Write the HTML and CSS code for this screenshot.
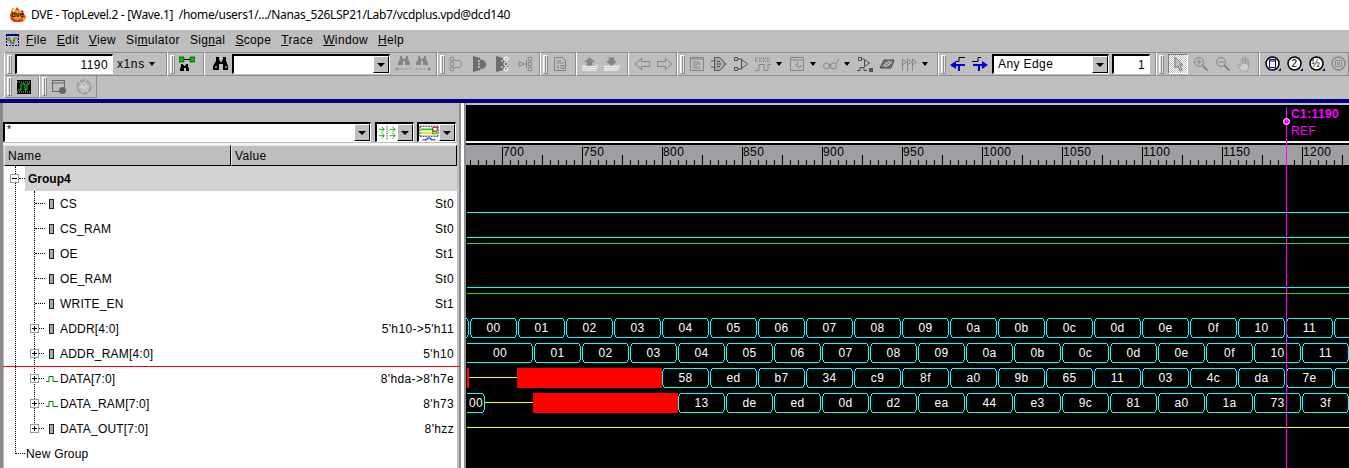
FILE: index.html
```html
<!DOCTYPE html>
<html>
<head>
    <meta charset="UTF-8">
    <title>DVE - TopLevel.2 - [Wave.1]</title>
    <link rel="stylesheet" href="styles.css">
</head>
<body>
    <svg class="defs" width="0" height="0">
        <symbol id="i-bin" viewBox="0 0 16 16"><path d="M3 1h3v3h1v2h2V4h1V1h3v4l2 5v4H10V8H6v6H0v-4l3-5z" fill="currentColor"/><path d="M2 11h2M12 11h2" stroke="#fff"/></symbol>
        <symbol id="i-bin-prev" viewBox="0 0 18 16"><path d="M5 0h2v2h1v1h2V2h1V0h2v3l2 4v2h-5V5H8v4H3V7l2-4z" fill="currentColor"/><path d="M2 13h15" stroke="currentColor" stroke-dasharray="1 1"/><path d="M0 13l3-2v4z" fill="currentColor"/></symbol>
        <symbol id="i-bin-next" viewBox="0 0 18 16"><path d="M5 0h2v2h1v1h2V2h1V0h2v3l2 4v2h-5V5H8v4H3V7l2-4z" fill="currentColor"/><path d="M1 13h15" stroke="currentColor" stroke-dasharray="1 1"/><path d="M18 13l-3-2v4z" fill="currentColor"/></symbol>
        <symbol id="i-gate-a" viewBox="0 0 16 16"><circle cx="3" cy="3" r="2" fill="none" stroke="currentColor"/><circle cx="3" cy="8" r="2" fill="none" stroke="currentColor"/><circle cx="3" cy="13" r="2" fill="none" stroke="currentColor"/><path d="M5.500 4.500H9a3.500 3.500 0 0 1 0 7H5.500" fill="none" stroke="currentColor"/></symbol>
        <symbol id="i-gate-b" viewBox="0 0 16 16"><path d="M1 0l7 2v2h1a4.500 4.500 0 0 1 0 9H8v1l-7 2z" fill="#6e6e6e"/><path d="M8 4h1a4.500 4.500 0 0 1 3 8" fill="none" stroke="#6e6e6e"/><path d="M6 5h2M6 8h2M6 11h2" stroke="#fff"/></symbol>
        <symbol id="i-gate-c" viewBox="0 0 16 16"><path d="M1 0l7 2v2h1a4.500 4.500 0 0 1 0 9H8v1l-7 2z" fill="#6e6e6e"/><circle cx="11" cy="3" r="2" fill="none" stroke="#fff"/><circle cx="11" cy="8" r="2" fill="#6e6e6e" stroke="#fff"/><circle cx="11" cy="13" r="2" fill="none" stroke="#fff"/><path d="M6 5h2M6 11h2" stroke="#fff"/></symbol>
        <symbol id="i-gate-d" viewBox="0 0 16 16"><path d="M1 5.500L6 8l-5 2.500zM6 8h2" fill="none" stroke="currentColor"/><circle cx="12" cy="3" r="2" fill="none" stroke="currentColor"/><circle cx="12" cy="8" r="2" fill="none" stroke="currentColor"/><circle cx="12" cy="13" r="2" fill="none" stroke="currentColor"/><path d="M8.500 4v8" stroke="currentColor"/></symbol>
        <symbol id="i-doc" viewBox="0 0 16 16"><path d="M2.500 1.500h8l3 3v10h-11zM5 5h4M5 7h7M5 10h2M5 12h2M9 9.500h3v3H9z" fill="none" stroke="currentColor"/></symbol>
        <symbol id="i-up" viewBox="0 0 17 16"><path d="M8 1l6 5h-3v4H5V6H2z" fill="currentColor"/><path d="M0 10.500h14M0 12.500h15M0 14.500h15M14 11l3-2M15 13l2-2" stroke="#fff"/></symbol>
        <symbol id="i-down" viewBox="0 0 17 16"><path d="M8 10l6-5h-3V1H5v4H2z" fill="currentColor"/><path d="M0 10.500h14M0 12.500h15M0 14.500h15M14 11l3-2M15 13l2-2" stroke="#fff"/></symbol>
        <symbol id="i-left" viewBox="0 0 16 14"><path d="M7.500 1.500L1 7l6.500 5.500V9.500h8v-5h-8z" fill="none" stroke="currentColor"/></symbol>
        <symbol id="i-right" viewBox="0 0 16 14"><path d="M8.500 1.500L15 7l-6.500 5.500V9.500h-8v-5h8z" fill="none" stroke="currentColor"/></symbol>
        <symbol id="i-list" viewBox="0 0 16 16"><path d="M1.500 1.500h13v13h-13z" fill="none" stroke="currentColor"/><path d="M1 3h14M4 6h6M4 8h8M4 10h4M4 12h7" stroke="currentColor"/></symbol>
        <symbol id="i-mux" viewBox="0 0 16 16"><path d="M3.500 1.500h5l3 2.500a5 5 0 0 1 0 8l-3 2.500h-5z" fill="#a8a8a8" stroke="#555"/><path d="M0 5h4M0 11h4M14 8h2M6 5.500h3M6 8h4M6 10.500h3" stroke="#555"/></symbol>
        <symbol id="i-gates" viewBox="0 0 16 16"><path d="M1.500 1.500h3v3h-3zM1.500 11.500h3v3h-3zM8.500 3.500l6 4.500-6 4.500zM4 3h4.500v2M4 13h4.500v-2" fill="none" stroke="currentColor"/></symbol>
        <symbol id="i-waves" viewBox="0 0 16 16"><path d="M0 2h16M0 5.500h16" stroke="currentColor" stroke-dasharray="1 1"/><path d="M1 2v3M5 2v3M9 2v3M13 2v3" stroke="currentColor"/><path d="M0 14.500h4v-6h5v6h4v-6h3" fill="none" stroke="currentColor"/></symbol>
        <symbol id="i-sched" viewBox="0 0 16 16"><path d="M1.500 1.500h13v13h-13z" fill="none" stroke="currentColor"/><path d="M1 4h14M8.500 6v3H6M8 11h4M12 9v2" stroke="currentColor" fill="none"/></symbol>
        <symbol id="i-glass" viewBox="0 0 16 16"><circle cx="3.500" cy="10" r="3" fill="none" stroke="currentColor"/><circle cx="10.500" cy="10" r="3" fill="none" stroke="currentColor"/><path d="M6 9h2M13 8l3-5" fill="none" stroke="currentColor"/></symbol>
        <symbol id="i-gate-wave" viewBox="0 0 16 16"><path d="M1.500 1.500h3v3h-3zM7.500 3.500l5 3.500-5 3.500zM4 3h3M0 14.500h3v-3h4v3h3" fill="none" stroke="currentColor"/><path d="M12 12h4v4h-4z" fill="#555"/></symbol>
        <symbol id="i-chip" viewBox="0 0 16 16"><path d="M1 12l4-8h10l-3 8z" fill="#777" stroke="#444"/><path d="M4 10l7-5M6 11l7-5" stroke="#ddd"/></symbol>
        <symbol id="i-flags" viewBox="0 0 16 16"><path d="M1.500 15V3l4 3-4 3M6.500 15V3l4 3-4 3M11.500 15V3l4 3-4 3" fill="none" stroke="currentColor"/></symbol>
        <symbol id="i-edge-prev" viewBox="0 0 16 16"><path d="M6 5.500h3v-4h6" fill="none" stroke="#000"/><path d="M0 9l6-4v3h9v2H6v3z" fill="#00d"/><path d="M8.500 8v7M9.500 8v7" stroke="#00d"/></symbol>
        <symbol id="i-edge-next" viewBox="0 0 16 16"><path d="M0 5.500h6v-4h3" fill="none" stroke="#000"/><path d="M16 9l-6-4v3H1v2h9v3z" fill="#00d"/><path d="M6.500 8v7M7.500 8v7" stroke="#00d"/></symbol>
        <symbol id="i-pointer" viewBox="0 0 16 16"><path d="M5 1v11l3-2 2 5 2-1-2-5h3z" fill="#bebebe" stroke="#777"/></symbol>
        <symbol id="i-zoom-in" viewBox="0 0 16 16"><circle cx="6" cy="6" r="4.500" fill="none" stroke="currentColor"/><path d="M3.500 6h5M6 3.500v5" stroke="currentColor"/><path d="M9.500 9.500l5 5" stroke="currentColor" stroke-width="2"/></symbol>
        <symbol id="i-zoom-out" viewBox="0 0 16 16"><circle cx="6" cy="6" r="4.500" fill="none" stroke="currentColor"/><path d="M3.500 6h5" stroke="currentColor"/><path d="M9.500 9.500l5 5" stroke="currentColor" stroke-width="2"/></symbol>
        <symbol id="i-hand" viewBox="0 0 16 16"><path d="M4 15L1 9l1-1 2 2V3h1.500v5V1.500H7V8 1h1.500v7-6H10v7-5h1.500v7l-1 4z" fill="#cfcfcf" stroke="#9a9a9a" stroke-width=".8"/></symbol>
        <symbol id="i-mark" viewBox="0 0 16 16"><circle cx="7.500" cy="7.500" r="6.500" fill="#fff" stroke="#000" stroke-width="1.500"/><path d="M13 15h3v-3z" fill="#00008b"/></symbol>
    </svg>

    <header class="titlebar">
        <svg class="app-logo" viewBox="0 0 18 16" width="18" height="16">
            <path d="M1 9l2-5 2 2 3-5 3 4 3-1 1 4 2 3-2 4-4 1H5l-3-2z" fill="#e33a10"/>
            <circle cx="8.500" cy="9" r="5" fill="#f0a020"/>
            <circle cx="15" cy="13" r="1.500" fill="#f7c400"/><circle cx="4" cy="3" r="1.500" fill="#f7c400"/>
            <text x="2.500" y="11" class="app-logo-text">dve</text>
        </svg>
        <span class="title-text">DVE - TopLevel.2 - [Wave.1]  /home/users1/.../Nanas_526LSP21/Lab7/vcdplus.vpd@dcd140</span>
    </header>

    <nav class="menubar">
        <svg class="menu-icon" viewBox="0 0 13 12" width="13" height="12">
            <path d="M0 1h13" stroke="#00008b" stroke-width="2"/>
            <path d="M0 11.500h13M.5 1v10M12.500 1v10" stroke="#00008b" stroke-dasharray="2 1"/>
            <path d="M1 4h3v5h4V4h4" fill="none" stroke="#00a000"/>
            <path d="M1 6h4v3h3V6h4" fill="none" stroke="#c00000" stroke-dasharray="2 2"/>
        </svg>
        <a><u>F</u>ile</a><a><u>E</u>dit</a><a><u>V</u>iew</a><a>Si<u>m</u>ulator</a><a>Sig<u>n</u>al</a><a><u>S</u>cope</a><a><u>T</u>race</a><a><u>W</u>indow</a><a><u>H</u>elp</a>
    </nav>

    <div class="toolrow">
        <div class="tb tb-time">
            <span class="grip"></span>
            <span class="field field-time">1190</span>
            <span class="unit">x1ns</span>
            <span class="drop"></span>
        </div>
        <div class="tb tb-search">
            <span class="grip"></span>
            <svg class="ic" viewBox="0 0 16 16"><rect width="16" height="16" fill="none"/><path d="M0 1h5v5H0zM11 1h5v5h-5z" fill="#00c000" stroke="#000" stroke-width=".5"/><path d="M5 3.500h6" stroke="#000"/><path d="M2 8h2v1h1v1h1V9h1V8h2v2l1 3v2H7v-3H5v3H1v-2l1-3z" fill="#000"/></svg>
        </div>
        <div class="tb tb-find">
            <svg class="ic ic-bin"><use href="#i-bin"/></svg>
            <span class="combo combo-find"><span class="combo-text"></span><span class="arrow-btn"></span></span>
            <svg class="ic ic-dis ic-find"><use href="#i-bin-prev"/></svg>
            <svg class="ic ic-dis ic-find"><use href="#i-bin-next"/></svg>
        </div>
        <div class="tb tb-gates">
            <span class="grip"></span>
            <svg class="ic ic-dis ic-w"><use href="#i-gate-a"/></svg>
            <svg class="ic ic-dis ic-w"><use href="#i-gate-b"/></svg>
            <svg class="ic ic-dis ic-w"><use href="#i-gate-c"/></svg>
            <svg class="ic ic-dis ic-w"><use href="#i-gate-d"/></svg>
        </div>
        <div class="tb tb-doc">
            <span class="grip"></span>
            <svg class="ic ic-dis"><use href="#i-doc"/></svg>
        </div>
        <div class="tb tb-load">
            <svg class="ic ic-dis"><use href="#i-up"/></svg>
            <svg class="ic ic-dis"><use href="#i-down"/></svg>
        </div>
        <div class="tb tb-nav">
            <svg class="ic ic-dis ic-w"><use href="#i-left"/></svg>
            <svg class="ic ic-dis ic-w"><use href="#i-right"/></svg>
        </div>
        <div class="tb tb-views">
            <span class="grip"></span>
            <svg class="ic ic-dis"><use href="#i-list"/></svg>
            <svg class="ic"><use href="#i-mux"/></svg>
            <svg class="ic ic-dark"><use href="#i-gates"/></svg>
            <svg class="ic ic-dis"><use href="#i-waves"/></svg>
            <span class="drop drop-tool"></span>
            <svg class="ic ic-dis"><use href="#i-sched"/></svg>
            <span class="drop drop-tool"></span>
            <svg class="ic ic-dis"><use href="#i-glass"/></svg>
            <span class="drop drop-tool"></span>
            <svg class="ic ic-dark"><use href="#i-gate-wave"/></svg>
            <svg class="ic"><use href="#i-chip"/></svg>
            <svg class="ic ic-dis"><use href="#i-flags"/></svg>
            <span class="drop drop-tool"></span>
        </div>
        <div class="tb tb-edge">
            <span class="grip"></span>
            <svg class="ic"><use href="#i-edge-prev"/></svg>
            <svg class="ic"><use href="#i-edge-next"/></svg>
            <span class="combo combo-edge"><span class="combo-text">Any Edge</span><span class="arrow-btn"></span></span>
            <span class="field field-step">1</span>
        </div>
        <div class="tb tb-zoom">
            <span class="grip"></span>
            <span class="pointer-btn"><svg class="ic"><use href="#i-pointer"/></svg></span>
            <svg class="ic ic-dis"><use href="#i-zoom-in"/></svg>
            <svg class="ic ic-dis"><use href="#i-zoom-out"/></svg>
            <svg class="ic"><use href="#i-hand"/></svg>
        </div>
        <div class="tb tb-marks">
            <svg class="ic" viewBox="0 0 16 16"><use href="#i-mark"/><path d="M4.500 3.500h6v8h-6zM4 5h7" fill="none" stroke="#00008b"/></svg>
            <svg class="ic" viewBox="0 0 16 16"><use href="#i-mark"/><text x="4.500" y="11" class="mark-text">2</text></svg>
            <svg class="ic" viewBox="0 0 16 16"><use href="#i-mark"/><text x="2.500" y="11" class="mark-text">½</text></svg>
            <svg class="ic" viewBox="0 0 16 16"><circle cx="7.500" cy="7.500" r="6.500" fill="none" stroke="#8a8a8a" stroke-width="1.500"/><path d="M4.500 4.500h6v6h-6zM6.500 6.500h2v2h-2z" fill="none" stroke="#8a8a8a"/></svg>
        </div>
    </div>

    <div class="toolrow toolrow-2">
        <div class="tb tb-a">
            <span class="grip"></span>
            <svg class="ic" viewBox="0 0 16 16"><path d="M1 1h14v14H1z" fill="#000"/><path d="M1 3h14M1 13h14" stroke="#bbb" stroke-dasharray="1 1"/><path d="M2 11h3V5h4v6h2V5h3" fill="none" stroke="#20e020"/></svg>
        </div>
        <div class="tb tb-b">
            <span class="grip"></span>
            <svg class="ic" viewBox="0 0 16 16"><path d="M1.500 1.500h12v11h-12zM1 4h13" fill="none" stroke="#666"/><circle cx="11.500" cy="11.500" r="3.500" fill="#666"/></svg>
            <svg class="ic ic-ghost" viewBox="0 0 16 16"><circle cx="8" cy="8" r="6.500" fill="none" stroke="#999" stroke-width="2" stroke-dasharray="5 1.500"/><path d="M4 9l2-3 2 4 2-4 2 3" fill="none" stroke="#ddd"/></svg>
        </div>
    </div>

    <div class="bluebar"></div>

    <main class="panes">
        <section class="signals">
            <div class="filter-row">
                <span class="combo combo-filter"><span class="combo-text">*</span><span class="arrow-btn"></span></span>
                <span class="pick">
                    <svg class="pick-icon" viewBox="0 0 22 16"><path d="M2 4h6M5 1l3 3-3 3M2 11h6M5 8l3 3-3 3M14 4h6M17 1l3 3-3 3M14 11h6M17 8l3 3-3 3" fill="none" stroke="#00a000"/><path d="M11 0v15" stroke="#000" stroke-dasharray="1 1"/></svg>
                    <span class="arrow-btn"></span>
                </span>
                <span class="pick">
                    <svg class="pick-icon" viewBox="0 0 22 16"><path d="M1 .5h20M1 11.500h20M1 1v10M21 1v10" stroke="#000" stroke-dasharray="2 1"/><path d="M2 4h14" stroke="#20d020" stroke-width="2"/><path d="M2 8h16" stroke="#e8e800" stroke-width="2"/><path d="M15 2h5v4h-5z" fill="none" stroke="#e00000"/><path d="M15 6h4v3h-4z" fill="none" stroke="#00a000"/><path d="M4 15.500h5v-2h4v2h5" fill="none" stroke="#0000e0"/></svg>
                    <span class="arrow-btn"></span>
                </span>
            </div>
            <div class="col-head"><span class="col col-name">Name</span><span class="col col-value">Value</span></div>
            <div class="tree">
                <span class="vline vline-root"></span>
                <span class="vline vline-group"></span>
                <div class="row row-group"><span class="box box-minus"></span><span class="stub stub-group"></span><span class="group-name">Group4</span></div>
                <div class="row"><span class="stub stub-leaf"></span><span class="pin"></span><span class="sig">CS</span><span class="val">St0</span></div>
                <div class="row"><span class="stub stub-leaf"></span><span class="pin"></span><span class="sig">CS_RAM</span><span class="val">St0</span></div>
                <div class="row"><span class="stub stub-leaf"></span><span class="pin"></span><span class="sig">OE</span><span class="val">St1</span></div>
                <div class="row"><span class="stub stub-leaf"></span><span class="pin"></span><span class="sig">OE_RAM</span><span class="val">St0</span></div>
                <div class="row"><span class="stub stub-leaf"></span><span class="pin"></span><span class="sig">WRITE_EN</span><span class="val">St1</span></div>
                <div class="row row-bus"><span class="box box-plus"></span><span class="stub stub-bus"></span><span class="pin"></span><span class="sig">ADDR[4:0]</span><span class="val">5'h10-&gt;5'h11</span></div>
                <div class="row row-bus"><span class="box box-plus"></span><span class="stub stub-bus"></span><span class="pin"></span><span class="sig">ADDR_RAM[4:0]</span><span class="val">5'h10</span></div>
                <div class="row row-bus row-marked"><span class="box box-plus"></span><span class="stub stub-bus"></span><svg class="pulse" viewBox="0 0 12 6"><path d="M0 5.500h3v-5h4v5h5" fill="none" stroke="#008000"/></svg><span class="sig">DATA[7:0]</span><span class="val">8'hda-&gt;8'h7e</span></div>
                <div class="row row-bus"><span class="box box-plus"></span><span class="stub stub-bus"></span><svg class="pulse" viewBox="0 0 12 6"><path d="M0 5.500h3v-5h4v5h5" fill="none" stroke="#008000"/></svg><span class="sig">DATA_RAM[7:0]</span><span class="val">8'h73</span></div>
                <div class="row row-bus"><span class="box box-plus"></span><span class="stub stub-bus"></span><span class="pin"></span><span class="sig">DATA_OUT[7:0]</span><span class="val">8'hzz</span></div>
                <div class="row row-new"><span class="stub stub-new"></span><span class="new-name">New Group</span></div>
            </div>
        </section>
        <div class="splitter"></div>
        <section class="wave">
            <svg id="wave-canvas" class="wave-canvas" viewBox="466 103 883 365" width="883" height="365"></svg>
        </section>
    </main>
    <script src="wave.js"></script>
</body>
</html>
```

FILE: styles.css
```css
* {
    box-sizing: border-box;
}
body {
    margin: 0;
    width: 1349px;
    height: 468px;
    overflow: hidden;
    background-color: #bebebe;
    font-family: 'Liberation Sans', Arial, sans-serif;
    font-size: 12px;
    color: #000;
}
.defs {
    position: absolute;
}

/* title + menu */
.titlebar {
    display: flex;
    align-items: center;
    gap: 4px;
    height: 30px;
    padding: 0 0 2px 9px;
    background-color: #fff;
}
.title-text {
    font-family: 'Noto Sans', sans-serif;
    font-size: 12px;
    letter-spacing: -.31px;
    white-space: pre;
}
.app-logo-text {
    font-family: 'Liberation Sans', sans-serif;
    font-size: 7px;
    font-weight: bold;
    fill: #000;
}
.menubar {
    display: flex;
    align-items: center;
    height: 22px;
    padding: 0 0 2px 6px;
    letter-spacing: .35px;
}
.menu-icon {
    margin-right: 7px;
}
.menubar a {
    margin-right: 10px;
}

/* toolbars */
.toolrow {
    display: flex;
    height: 24px;
    padding-left: 4px;
}
.toolrow-2 {
    height: 23px;
    margin-top: -1px;
}
.tb {
    display: flex;
    flex: none;
    align-items: center;
    padding-left: 2px;
    border: 1px solid #8c8c8c;
    border-left-color: #fff;
}
.tb-time { width: 163px; }
.tb-search { width: 37px; }
.tb-find { width: 233px; padding-left: 8px; }
.tb-gates { width: 103px; }
.tb-doc { width: 36px; }
.tb-load { width: 52px; padding-left: 5px; }
.tb-nav { width: 49px; padding-left: 5px; }
.tb-views { width: 261px; }
.tb-edge { width: 218px; }
.tb-zoom { width: 103px; }
.tb-marks { width: 90px; padding-left: 5px; }
.tb-a { width: 35px; }
.tb-b { width: 58px; }
.grip {
    flex: none;
    width: 5px;
    height: 19px;
    margin-right: 4px;
    border: 1px solid #8c8c8c;
    border-color: #fff #8c8c8c #8c8c8c #fff;
    background: linear-gradient(90deg, #e6e6e6 0 1px, #8c8c8c 1px 2px, #e6e6e6 2px);
}
.tb-time .grip {
    margin-right: 3px;
}
.ic {
    flex: none;
    width: 16px;
    height: 16px;
    margin-right: 6px;
}
.ic-w { margin-right: 7px; }
.ic-dis { color: #858585; }
.ic-dark { color: #4a4a4a; }
.ic-bin { color: #000; margin-right: 3px; }
.ic-find { width: 18px; margin-right: 0; }
.ic-ghost { margin-left: 3px; }
.field {
    flex: none;
    height: 20px;
    line-height: 18px;
    padding-right: 4px;
    text-align: right;
    background-color: #fff;
    border-style: solid;
    border-width: 2px 1px 1px 2px;
    border-color: #000 #fff #fff #000;
    letter-spacing: .4px;
}
.field-time { width: 98px; }
.field-step { width: 38px; margin-left: 3px; }
.unit {
    margin-left: 4px;
    letter-spacing: .6px;
}
.drop {
    flex: none;
    width: 0;
    height: 0;
    margin-left: 4px;
    border-style: solid;
    border-width: 4px 3.5px 0;
    border-color: #000 transparent transparent;
}
.drop-tool {
    margin: 0 7px 0 -1px;
}
.combo {
    display: flex;
    flex: none;
    height: 20px;
    background-color: #fff;
    border-style: solid;
    border-width: 2px 1px 1px 2px;
    border-color: #000 #fff #fff #000;
}
.combo-find { width: 158px; margin-right: 5px; }
.combo-edge { width: 117px; margin-left: -2px; }
.combo-text {
    flex: 1;
    padding-left: 4px;
    line-height: 17px;
    letter-spacing: .4px;
}
.arrow-btn {
    position: relative;
    flex: none;
    width: 16px;
    height: 100%;
    background-color: #bebebe;
    border: 1px solid;
    border-color: #fff #000 #000 #fff;
}
.arrow-btn::after {
    content: "";
    position: absolute;
    top: 6px;
    left: 3px;
    border-style: solid;
    border-width: 4px 4px 0;
    border-color: #000 transparent transparent;
}
.pointer-btn {
    display: flex;
    flex: none;
    align-items: center;
    justify-content: center;
    width: 20px;
    height: 20px;
    margin-right: 5px;
    background: repeating-conic-gradient(#fff 0 25%, #bebebe 0 50%) 0 0 / 2px 2px;
    border: 1px solid;
    border-color: #808080 #fff #fff #808080;
}
.pointer-btn .ic {
    margin: 0;
}
.mark-text {
    font-family: 'Liberation Sans', sans-serif;
    font-size: 10px;
}
.bluebar {
    height: 4px;
    margin-top: 1px;
    background-color: #000080;
}

/* main area */
.panes {
    display: flex;
    height: 365px;
}
.signals {
    display: flex;
    flex-direction: column;
    flex: none;
    width: 457px;
    border-left: 3px solid #8a8a8a;
    padding-left: 1px;
}
.filter-row {
    display: flex;
    flex: none;
    gap: 3px;
    height: 42px;
    padding: 19px 0 1px;
    margin-left: -1px;
    border-bottom: 2px solid #f4f4f4;
}
.combo-filter {
    width: 368px;
    margin-right: 1px;
}
.combo-filter .combo-text {
    padding: 0 0 0 2px;
    font-size: 10px;
    line-height: 11px;
}
.pick {
    display: flex;
    flex: none;
    align-items: center;
    width: 39px;
    height: 20px;
    background-color: #fff;
    border-style: solid;
    border-width: 2px 1px 1px 2px;
    border-color: #000 #fff #fff #000;
}
.pick-icon {
    width: 21px;
    height: 16px;
}
.col-head {
    display: flex;
    flex: none;
    height: 21px;
    letter-spacing: .35px;
}
.col {
    padding: 3px 0 0 3px;
    border: 1px solid;
    border-color: #e6e6e6 #000 #000 #e6e6e6;
}
.col-name { width: 227px; }
.col-value { flex: 1; }
.tree {
    position: relative;
    flex: 1;
    background-color: #fff;
    letter-spacing: .2px;
}
.vline {
    position: absolute;
    width: 0;
    border-left: 1px dotted #000;
}
.vline-root {
    left: 11px;
    top: 0;
    height: 288px;
}
.vline-group {
    left: 30px;
    top: 25px;
    height: 240px;
}
.row {
    display: flex;
    align-items: center;
    height: 25px;
    padding-left: 31px;
}
.row-bus {
    padding-left: 26px;
}
.row-group {
    position: relative;
    padding-left: 6px;
}
.row-new {
    padding-left: 11px;
}
.row-marked {
    position: relative;
}
.row-marked::before {
    content: "";
    position: absolute;
    z-index: 2;
    top: 0;
    left: -1px;
    right: -3px;
    height: 1px;
    background-color: #f00;
}
.box {
    position: relative;
    z-index: 1;
    flex: none;
    width: 9px;
    height: 9px;
    background: linear-gradient(#000, #000) center / 5px 1px no-repeat #fff;
    border: 1px solid #999;
}
.box-plus {
    background:
        linear-gradient(#000, #000) center / 5px 1px no-repeat,
        linear-gradient(#000, #000) center / 1px 5px no-repeat,
        #fff;
}
.stub {
    flex: none;
    height: 0;
    border-top: 1px dotted #000;
}
.stub-group { width: 6px; margin-right: 3px; }
.stub-leaf { width: 10px; margin-right: 4px; }
.stub-bus { width: 5px; margin-right: 4px; }
.stub-new { width: 10px; margin-right: 1px; }
.pin {
    flex: none;
    width: 5px;
    height: 10px;
    margin-right: 6px;
    background-color: #9fb0a5;
    border: 1px solid #222;
}
.row-bus .pin {
    margin-left: 1px;
}
.pulse {
    flex: none;
    width: 12px;
    height: 6px;
    margin: 0 2px 0 -2px;
}
.sig {
    flex: 1;
}
.row-group .group-name {
    flex: 1;
    height: 25px;
    margin-left: -3px;
    padding: 6px 0 0 3px;
    font-weight: bold;
    letter-spacing: 0;
    background-color: #d3d3d3;
}
.val {
    padding-right: 3px;
    letter-spacing: .35px;
}
.splitter {
    flex: none;
    width: 9px;
    background: linear-gradient(90deg, #bebebe 0 2px, #8e8e8e 2px 4px, #fff 4px 7px, #8e8e8e 7px 9px);
}
.wave {
    flex: none;
    width: 883px;
}
.wave-canvas {
    display: block;
}
.wave-canvas text {
    font-family: 'Liberation Sans', sans-serif;
    font-size: 12px;
    letter-spacing: .4px;
}
.wave-canvas path {
    shape-rendering: crispEdges;
}
```

FILE: wave.js
```js
// draws ruler, signals and cursor into the wave svg
const svg = document.getElementById('wave-canvas');
let out = '';

const CYAN = '#00ffff', GREEN = '#20e020', YELLOW = '#ffff00', RED = '#ff0000', MAGENTA = '#ff00ff';
const LEFT = 467, RIGHT = 1349;

function rect(x, y, w, h, c) {
    out += `<rect x="${x}" y="${y}" width="${w}" height="${h}" fill="${c}"/>`;
}
function hline(y, x0, x1, c) {
    rect(x0, y, x1 - x0, 1, c);
}
function label(x, y, s, c, extra) {
    out += `<text x="${x}" y="${y}" fill="${c}" ${extra || ''}>${s}</text>`;
}

rect(466, 103, 883, 365, '#000');
rect(466, 103, 883, 2, '#bebebe');
rect(466, 141, 883, 2, '#f4f4f4');

// ruler: 1.6px per time unit
rect(466, 145, 883, 20, '#9e9ea3');
for (let t = 680; t <= 1225; t += 5) {
    const x = Math.round(502 + (t - 700) * 1.6);
    if (x < 467) continue;
    let top = 160;
    if (t % 50 == 0) top = 147;
    else if (t % 25 == 0) top = 155;
    rect(x, top, 1, 165 - top, '#000');
    if (t % 50 == 0) label(x + 1, 156, t, '#000');
}

// plain one-bit signals
hline(212, 467, RIGHT, CYAN);
hline(237, 467, RIGHT, CYAN);
hline(243, 467, RIGHT, GREEN);
hline(287, 467, RIGHT, CYAN);
hline(293, 467, RIGHT, GREEN);
hline(427, 467, RIGHT, YELLOW);

// bus values, one hexagon per value
function bus(top, start, values) {
    const t = top + .5, b = top + 19.5;
    values.forEach((v, i) => {
        const x0 = start + 48 * i + .5, x1 = x0 + 48;
        out += `<path d="M${x0 + 3} ${t}H${x1 - 3}L${x1 - 1} ${t + 3}V${b - 3}L${x1 - 3} ${b}H${x0 + 3}L${x0 + 1} ${b - 3}V${t + 3}Z" fill="none" stroke="${CYAN}"/>`;
        label(x0 + 24, top + 14, v, '#fff', 'text-anchor="middle"');
    });
}
// value already running when the window opens
function stub(top, end, text) {
    const t = top + .5, b = top + 19.5, e = end + .5;
    out += `<path d="M${LEFT} ${t}H${e - 3}L${e - 1} ${t + 3}V${b - 3}L${e - 3} ${b}H${LEFT}" fill="none" stroke="${CYAN}"/>`;
    if (text) label((LEFT + end) / 2, top + 14, text, '#fff', 'text-anchor="middle"');
}

stub(318, 469);
bus(318, 469, ['00', '01', '02', '03', '04', '05', '06', '07', '08', '09', '0a', '0b', '0c', '0d', '0e', '0f', '10', '11', '']);

stub(343, 533, '00');
bus(343, 533, ['01', '02', '03', '04', '05', '06', '07', '08', '09', '0a', '0b', '0c', '0d', '0e', '0f', '10', '11']);

rect(467, 368, 2, 20, RED);
hline(377, 469, 517, YELLOW);
rect(517, 368, 145, 20, RED);
bus(368, 661, ['58', 'ed', 'b7', '34', 'c9', '8f', 'a0', '9b', '65', '11', '03', '4c', 'da', '7e', '']);

stub(393, 485, '00');
hline(402, 485, 533, YELLOW);
rect(533, 393, 145, 20, RED);
bus(393, 677, ['13', 'de', 'ed', '0d', 'd2', 'ea', '44', 'e3', '9c', '81', 'a0', '1a', '73', '3f']);

// C1 cursor
rect(1286, 107, 1, 361, MAGENTA);
out += `<circle cx="1286.5" cy="121.500" r="3" fill="${MAGENTA}" stroke="#fff"/>`;
label(1291, 118, 'C1:1190', MAGENTA, 'font-weight="bold"');
label(1291, 135, 'REF', MAGENTA);

svg.innerHTML = out;
```
